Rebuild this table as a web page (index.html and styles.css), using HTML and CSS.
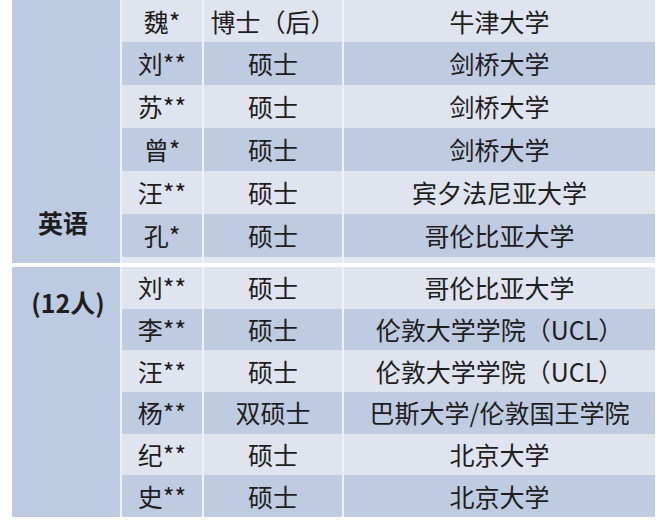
FILE: index.html
```html
<!DOCTYPE html>
<html lang="zh-CN">
<head>
<meta charset="utf-8">
<link rel="stylesheet" href="styles.css">
</head>
<body>
<div class="sheet">
  <section class="panel panel-top">
    <div class="group group-top"><span>英语</span></div>
    <div class="rows rows-top">
      <div class="row light"><div class="cell">魏*</div><div class="cell">博士（后）</div><div class="cell">牛津大学</div></div>
      <div class="row dark"><div class="cell">刘**</div><div class="cell">硕士</div><div class="cell">剑桥大学</div></div>
      <div class="row light"><div class="cell">苏**</div><div class="cell">硕士</div><div class="cell">剑桥大学</div></div>
      <div class="row dark"><div class="cell">曾*</div><div class="cell">硕士</div><div class="cell">剑桥大学</div></div>
      <div class="row light"><div class="cell">汪**</div><div class="cell">硕士</div><div class="cell">宾夕法尼亚大学</div></div>
      <div class="row dark"><div class="cell">孔*</div><div class="cell">硕士</div><div class="cell">哥伦比亚大学</div></div>
      <div class="row light sliver"><div class="cell"></div><div class="cell"></div><div class="cell"></div></div>
    </div>
  </section>
  <section class="panel panel-bottom">
    <div class="group group-bottom"><span>(12人)</span></div>
    <div class="rows rows-bottom">
      <div class="row light"><div class="cell">刘**</div><div class="cell">硕士</div><div class="cell">哥伦比亚大学</div></div>
      <div class="row dark"><div class="cell">李**</div><div class="cell">硕士</div><div class="cell">伦敦大学学院（UCL）</div></div>
      <div class="row light"><div class="cell">汪**</div><div class="cell">硕士</div><div class="cell">伦敦大学学院（UCL）</div></div>
      <div class="row dark"><div class="cell">杨**</div><div class="cell">双硕士</div><div class="cell">巴斯大学/伦敦国王学院</div></div>
      <div class="row light"><div class="cell">纪**</div><div class="cell">硕士</div><div class="cell">北京大学</div></div>
      <div class="row dark"><div class="cell">史**</div><div class="cell">硕士</div><div class="cell">北京大学</div></div>
    </div>
  </section>
</div>
</body>
</html>
```
FILE: styles.css
```css
html, body {
  margin: 0;
  padding: 0;
  background: #ffffff;
}
body {
  font-family: "Noto Sans CJK SC", "Noto Sans", sans-serif;
  color: #1e1e1e;
  font-size: 25px;
}
.sheet {
  width: 643px;
  margin-left: 12px;
  display: flex;
  flex-direction: column;
  gap: 4px;
}
.panel {
  display: grid;
  grid-template-columns: 108px 1fr;
  column-gap: 2px;
  background: #eef1f7;
}
.panel-top { height: 263px; }
.panel-bottom { height: 250px; }
.group {
  background: #bccae2;
  display: flex;
  justify-content: center;
  font-weight: bold;
  line-height: 30px;
}
.group-top {
  align-items: flex-end;
  padding-bottom: 26px;
}
.group-top span { margin-right: 6px; }
.group-bottom {
  align-items: flex-start;
  padding-top: 20px;
}
.group-bottom span { margin-left: 4px; }
.rows {
  display: grid;
}
.rows-top {
  grid-template-rows: 42px repeat(5, 43px) 1fr;
}
.rows-bottom {
  grid-template-rows: repeat(6, 1fr);
}
.row {
  display: grid;
  grid-template-columns: 80px 138px 1fr;
  column-gap: 2px;
}
.cell {
  display: flex;
  align-items: center;
  justify-content: center;
  line-height: 1;
  white-space: nowrap;
}
.light .cell { background: #dfe4ef; }
.dark .cell { background: #bfcbe1; }
.sliver .cell { background: #e3e8f2; }
```
